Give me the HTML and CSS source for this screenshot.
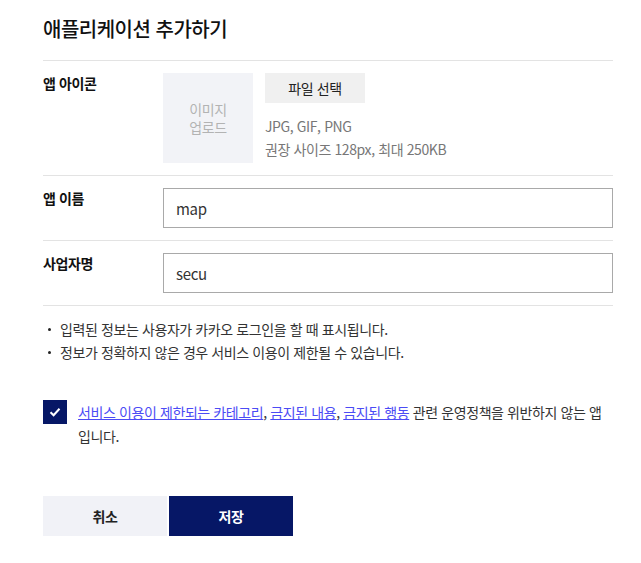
FILE: index.html
```html
<!DOCTYPE html>
<html lang="ko">
<head>
<meta charset="utf-8">
<title>애플리케이션 추가하기</title>
<link rel="stylesheet" href="styles.css">
</head>
<body>
<div class="page">
  <h1 class="title">애플리케이션 추가하기</h1>
  <div class="form">
    <div class="row">
      <div class="label">앱 아이콘</div>
      <div class="field icon-field">
        <div class="upload-box">이미지<br>업로드</div>
        <div class="upload-side">
          <button class="file-btn" type="button">파일 선택</button>
          <p class="hint">JPG, GIF, PNG<br>권장 사이즈 128px, 최대 250KB</p>
        </div>
      </div>
    </div>
    <div class="row">
      <div class="label">앱 이름</div>
      <div class="field"><input class="text-input" type="text" value="map"></div>
    </div>
    <div class="row">
      <div class="label">사업자명</div>
      <div class="field"><input class="text-input" type="text" value="secu"></div>
    </div>
  </div>
  <ul class="notes">
    <li>입력된 정보는 사용자가 카카오 로그인을 할 때 표시됩니다.</li>
    <li>정보가 정확하지 않은 경우 서비스 이용이 제한될 수 있습니다.</li>
  </ul>
  <div class="agree">
    <span class="checkbox">
      <svg width="12" height="10" viewBox="0 0 12 10"><path d="M1.5 5.2 L4.6 8.2 L10.5 1.8" fill="none" stroke="#fff" stroke-width="2"/></svg>
    </span>
    <p class="agree-text"><a href="#">서비스 이용이 제한되는 카테고리</a>, <a href="#">금지된 내용</a>, <a href="#">금지된 행동</a> 관련 운영정책을 위반하지 않는 앱입니다.</p>
  </div>
  <div class="actions">
    <button class="btn btn-cancel" type="button">취소</button>
    <button class="btn btn-save" type="button">저장</button>
  </div>
</div>
</body>
</html>
```
FILE: styles.css
```css
* { box-sizing: border-box; }
body {
  margin: 0;
  background: #fff;
  font-family: "Noto Sans CJK KR", "Noto Sans", sans-serif;
  color: #222;
  letter-spacing: -0.4px;
}
.page {
  width: 570px;
  margin-left: 43px;
  padding-top: 14px;
}
.title {
  margin: 0;
  font-size: 20px;
  line-height: 30px;
  font-weight: 500;
  color: #111;
  letter-spacing: -0.5px;
  padding-bottom: 16px;
  border-bottom: 1px solid #e3e3e3;
}
.row {
  display: flex;
  padding: 12px 0;
  border-bottom: 1px solid #e3e3e3;
}
.label {
  width: 120px;
  flex: none;
  font-size: 14px;
  line-height: 20px;
  font-weight: 700;
  color: #111;
}
.field { flex: 1; }
.icon-field { display: flex; gap: 12px; }
.upload-box {
  width: 90px;
  height: 90px;
  background: #f2f3f7;
  color: #b3b3b3;
  font-size: 14px;
  line-height: 18px;
  display: flex;
  align-items: center;
  justify-content: center;
  text-align: center;
}
.file-btn {
  display: block;
  width: 100px;
  height: 30px;
  border: 0;
  background: #f0f0f0;
  font-family: inherit;
  font-size: 14px;
  letter-spacing: -0.4px;
  color: #222;
  padding: 0;
}
.hint {
  margin: 12px 0 0;
  font-size: 14px;
  line-height: 23px;
  color: #777;
}
.text-input {
  display: block;
  width: 100%;
  height: 40px;
  border: 1px solid #a9a9a9;
  padding: 0 12px;
  font-family: inherit;
  font-size: 15px;
  letter-spacing: -0.3px;
  color: #333;
  outline: none;
}
.notes {
  list-style: none;
  margin: 12px 0 0;
  padding: 0;
}
.notes li {
  position: relative;
  padding-left: 17px;
  font-size: 14px;
  line-height: 23px;
  color: #333;
}
.notes li::before {
  content: "";
  position: absolute;
  left: 5px;
  top: 10px;
  width: 3px;
  height: 3px;
  border-radius: 50%;
  background: #222;
}
.agree {
  display: flex;
  gap: 11px;
  margin-top: 36px;
}
.checkbox {
  flex: none;
  width: 24px;
  height: 24px;
  background: #061766;
  display: flex;
  align-items: center;
  justify-content: center;
}
.agree-text {
  margin: 0;
  font-size: 14px;
  line-height: 24px;
  color: #333;
  word-break: break-all;
}
.agree-text a { color: #4b4bf5; }
.actions {
  display: flex;
  gap: 2px;
  margin-top: 48px;
}
.btn {
  width: 124px;
  height: 40px;
  border: 0;
  font-family: inherit;
  font-size: 14px;
  font-weight: 700;
  letter-spacing: -0.4px;
}
.btn-cancel { background: #f1f2f7; color: #222; }
.btn-save { background: #061766; color: #fff; }
```
